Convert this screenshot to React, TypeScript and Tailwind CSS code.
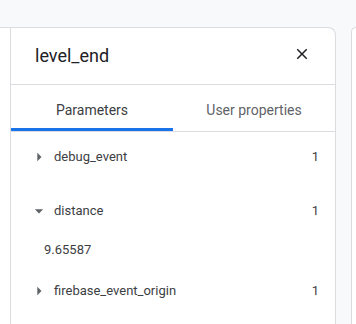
import type { ReactNode } from 'react';

const params = [
  { name: 'debug_event', count: 1, open: false, value: '' },
  { name: 'distance', count: 1, open: true, value: '9.65587' },
  { name: 'firebase_event_origin', count: 1, open: false, value: '' },
];

function ArrowRight() {
  return (
    <svg viewBox="0 0 24 24" className="h-5 w-5 fill-[#5f6368]">
      <path d="M10 17l5-5-5-5v10z" />
    </svg>
  );
}

function ArrowDown() {
  return (
    <svg viewBox="0 0 24 24" className="h-5 w-5 fill-[#5f6368]">
      <path d="M7 10l5 5 5-5z" />
    </svg>
  );
}

function CloseIcon() {
  return (
    <svg viewBox="0 0 24 24" className="h-[18px] w-[18px] fill-[#202124]">
      <path d="M19 6.41L17.59 5 12 10.59 6.41 5 5 6.41 10.59 12 5 17.59 6.41 19 12 13.41 17.59 19 19 17.59 13.41 12z" />
    </svg>
  );
}

function Tab({ active, children }: { active?: boolean; children: ReactNode }) {
  return (
    <div className="relative flex h-[46px] flex-1 justify-center pt-[15px]">
      <span
        className={`text-[14px] leading-5 ${active ? 'text-[#3c4043]' : 'text-[#5f6368]'}`}
      >
        {children}
      </span>
      {active && <div className="absolute inset-x-0 bottom-0 h-[3px] bg-[#1a73e8]" />}
    </div>
  );
}

export default function App() {
  return (
    <div
      className="flex h-[324px] w-[356px] overflow-hidden bg-[#f8f9fa] pt-[27px]"
      style={{ fontFamily: 'Roboto, "Noto Sans", sans-serif' }}
    >
      <div className="flex w-[336px] shrink-0 rounded-tr-[8px] border-t border-r border-[#dadce0] bg-white">
        <div className="w-[10px] shrink-0" />
        <div className="flex flex-1 flex-col border-l border-[#dadce0]">
          <header className="flex h-[57px] items-center justify-between border-b border-[#dadce0] pl-6 pr-6">
            <h1 className="text-[18px] leading-6 text-[#202124]">level_end</h1>
            <button className="mb-1 flex items-center justify-center">
              <CloseIcon />
            </button>
          </header>

          <div className="flex border-b border-[#dadce0]">
            <Tab active>Parameters</Tab>
            <Tab>User properties</Tab>
          </div>

          <ul className="pt-[15px] text-[13px] leading-5 text-[#3c4043]">
            {params.map((p, i) => (
              <li key={p.name} className={i === 0 ? 'mb-[34px]' : 'mb-[21px]'}>
                <div className="flex h-5 items-center pl-[18px] pr-4">
                  {p.open ? <ArrowDown /> : <ArrowRight />}
                  <span className="ml-[5px] flex-1">{p.name}</span>
                  <span>{p.count}</span>
                </div>
                {p.open && <div className="mt-[19px] pl-[33px]">{p.value}</div>}
              </li>
            ))}
          </ul>
        </div>
      </div>
      <div className="ml-[15px] flex-1 rounded-tl-[8px] border-t border-l border-[#dadce0] bg-white" />
    </div>
  );
}
